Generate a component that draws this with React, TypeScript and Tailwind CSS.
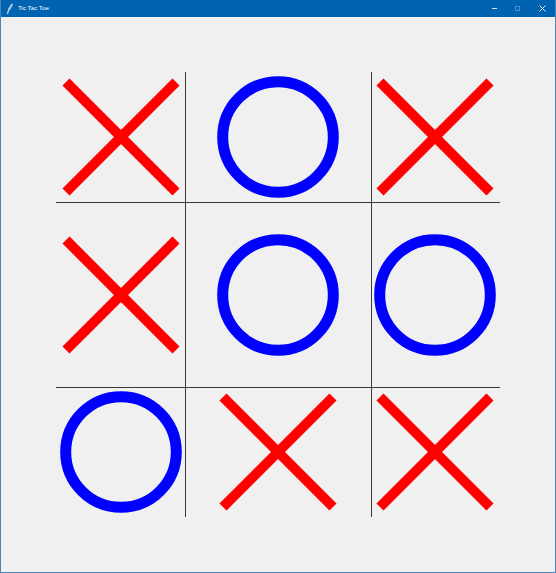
const X_MARKS: [number, number][] = [
  [121, 137],
  [435, 137],
  [121, 295],
  [278, 452],
  [435, 452],
];

const O_MARKS: [number, number][] = [
  [278, 137],
  [278, 295],
  [435, 295],
  [121, 452],
];

function TitleBar() {
  return (
    <div className="h-[17px] bg-[#0063b1] flex items-center text-white shrink-0">
      <svg width="10" height="12" viewBox="0 0 10 12" className="ml-[4px]">
        <path d="M7.5 1 C5 3 3.5 6 2.5 11" stroke="#cfe3f5" strokeWidth="1.2" fill="none" />
        <path d="M7.5 1 C7 4 5.5 6 3.5 8" stroke="#9cc3e6" strokeWidth="1" fill="none" />
      </svg>
      <span
        className="ml-[3px] text-[6.2px] leading-none"
        style={{ fontFamily: '"Segoe UI", "Liberation Sans", Arial, sans-serif' }}
      >
        Tic Tac Toe
      </span>
      <div className="ml-auto flex items-center h-full">
        <div className="w-[23px] h-full flex items-center justify-center">
          <div className="w-[5px] h-px bg-[#d6e6f5]" />
        </div>
        <div className="w-[23px] h-full flex items-center justify-center">
          <div className="w-[5px] h-[5px] border border-[#4d8fca]" />
        </div>
        <div className="w-[26px] h-full flex items-center justify-center">
          <svg width="7" height="7" viewBox="0 0 7 7">
            <path d="M0.5 0.5 L6.5 6.5 M6.5 0.5 L0.5 6.5" stroke="#e8f1fa" strokeWidth="1" />
          </svg>
        </div>
      </div>
    </div>
  );
}

function Board() {
  return (
    <svg width="554" height="555" viewBox="1 17 554 555" className="block">
      {/* grid */}
      <g stroke="#3a3a3a" strokeWidth="1" shapeRendering="crispEdges">
        <line x1="185.5" y1="72" x2="185.5" y2="517" />
        <line x1="371.5" y1="72" x2="371.5" y2="517" />
        <line x1="56" y1="202.5" x2="500" y2="202.5" />
        <line x1="56" y1="387.5" x2="500" y2="387.5" />
      </g>
      {X_MARKS.map(([cx, cy], i) => (
        <g key={`x${i}`} stroke="#ff0000" strokeWidth="10" strokeLinecap="butt">
          <line x1={cx - 55} y1={cy - 55} x2={cx + 55} y2={cy + 55} />
          <line x1={cx + 55} y1={cy - 55} x2={cx - 55} y2={cy + 55} />
        </g>
      ))}
      {O_MARKS.map(([cx, cy], i) => (
        <circle key={`o${i}`} cx={cx} cy={cy} r="55.3" fill="none" stroke="#0000ff" strokeWidth="11" />
      ))}
    </svg>
  );
}

export default function App() {
  return (
    <div className="w-[556px] h-[573px] flex flex-col bg-[#f0f0f0] border-x border-b border-[#4f86b8] overflow-hidden">
      <TitleBar />
      <div className="flex-1 bg-[#f0f0f0]">
        <Board />
      </div>
    </div>
  );
}
